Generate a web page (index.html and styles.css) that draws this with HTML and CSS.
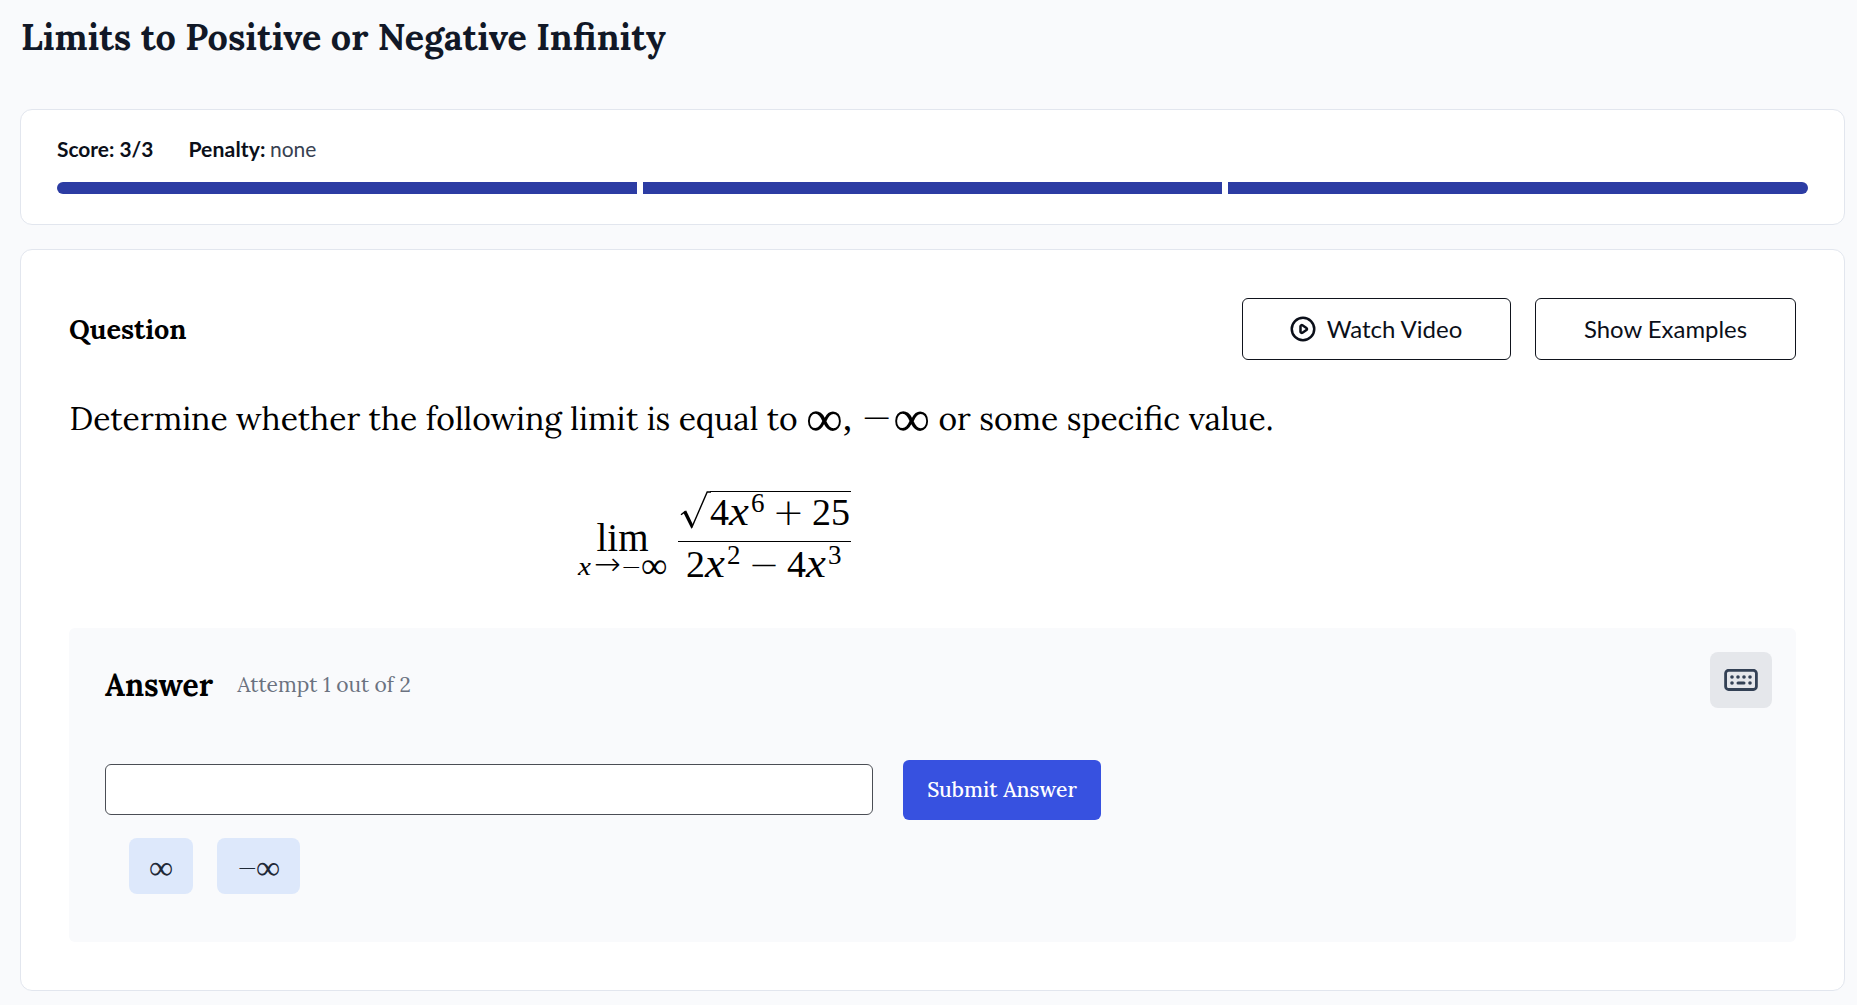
FILE: index.html
```html
<!DOCTYPE html>
<html lang="en">
<head>
<meta charset="utf-8">
<title>Limits to Positive or Negative Infinity</title>
<link rel="stylesheet" href="styles.css">
</head>
<body>
<h1 class="page-title">Limits to Positive or Negative Infinity</h1>

<section class="card score-card">
  <div class="score-row">
    <span class="strong">Score: 3/3</span>
    <span><span class="strong penalty">Penalty:</span> <span class="muted">none</span></span>
  </div>
  <div class="progress"><i></i><i></i><i></i></div>
</section>

<main class="card question-card">
  <header class="question-head">
    <h2>Question</h2>
    <div class="actions">
      <button class="outline-btn watch">
        <svg width="30" height="30" viewBox="0 0 24 24" fill="none" stroke="currentColor" stroke-width="2" stroke-linecap="round" stroke-linejoin="round"><path d="M14.752 11.168l-3.197-2.132A1 1 0 0010 9.87v4.263a1 1 0 001.555.832l3.197-2.132a1 1 0 000-1.664z"/><path d="M21 12a9 9 0 11-18 0 9 9 0 0118 0z"/></svg>
        <span>Watch Video</span>
      </button>
      <button class="outline-btn examples"><span>Show Examples</span></button>
    </div>
  </header>

  <p class="prompt">Determine whether the following limit is equal to <span class="inf">∞</span><span class="comma">,</span> <span class="op neg">−</span><span class="inf">∞</span> or some specific value.</p>

  <div class="formula">
    <div class="lim">
      <span class="lim-word">lim</span>
      <span class="lim-sub"><i class="var">x</i><span class="op arrow">→</span><span class="op neg">−</span><span class="inf">∞</span></span>
    </div>
    <div class="fraction">
      <div class="numerator">
        <svg class="radical" width="32" height="40" viewBox="0 0 32 40"><path d="M2 23.8L6 20.6L13.2 35.5L28.2 1H32" fill="none" stroke="#000" stroke-width="1.4"/><path d="M4.4 21.8L7.2 19.6L13.9 33.5L12.6 38Z"/></svg>
        <div class="radicand"><span>4</span><i class="var">x</i><sup>6</sup><span class="op plus">+</span><span>25</span></div>
      </div>
      <div class="denominator"><span>2</span><i class="var">x</i><sup>2</sup><span class="op minus">−</span><span>4</span><i class="var">x</i><sup>3</sup></div>
    </div>
  </div>

  <section class="answer">
    <div class="answer-head">
      <h3>Answer</h3>
      <span class="attempt">Attempt 1 out of 2</span>
      <button class="keyboard" aria-label="Keyboard">
        <svg width="34" height="22" viewBox="0 0 34 22" fill="#334155"><rect x="1.6" y="1.3" width="30.8" height="19.2" rx="3" fill="none" stroke="#334155" stroke-width="2.8"/><circle cx="8" cy="8" r="1.8"/><circle cx="14" cy="8" r="1.8"/><circle cx="20" cy="8" r="1.8"/><circle cx="26" cy="8" r="1.8"/><circle cx="8" cy="14" r="1.8"/><rect x="12.5" y="12.4" width="9" height="3.2" rx="1.5"/><circle cx="26" cy="14" r="1.8"/></svg>
      </button>
    </div>
    <div class="answer-form">
      <input class="answer-input" type="text" aria-label="Answer">
      <button class="submit">Submit Answer</button>
    </div>
    <div class="chips">
      <button class="chip chip-inf"><span class="inf">∞</span></button>
      <button class="chip chip-neg"><span class="op neg">−</span><span class="inf">∞</span></button>
    </div>
  </section>
</main>
</body>
</html>
```
FILE: styles.css
```css
* { box-sizing: border-box; }
body {
  margin: 0;
  padding: 12px 12px 0 20px;
  background: #f9fafc;
  color: #000;
  font-family: Lora, "Liberation Serif", serif;
}
h1, h2, h3, p { margin: 0; }
button { font: inherit; margin: 0; padding: 0; border: 0; }

.page-title {
  margin-left: 1px;
  height: 97px;
  font-size: 35.9px;
  line-height: 50px;
  font-weight: 700;
  color: #111827;
}
.card {
  background: #fff;
  border: 1px solid #e2e6ee;
  border-radius: 12px;
}
.score-card { height: 116px; padding: 25px 36px 0; }
.score-row {
  display: flex;
  gap: 35px;
  font-family: Lato, "Liberation Sans", sans-serif;
  font-size: 21px;
  line-height: 28px;
  white-space: nowrap;
}
.strong { font-weight: 700; color: #0b0f19; font-size: 20.9px; }
.penalty { font-size: 21.2px; letter-spacing: 0.1px; margin-right: -1px; }
.muted { color: #374151; }
.progress {
  display: grid;
  grid-template-columns: repeat(3, 1fr);
  gap: 6px;
  height: 12px;
  margin-top: 19px;
  border-radius: 6px;
  overflow: hidden;
}
.progress i { background: #2c3ca3; }

.question-card { height: 742px; margin-top: 24px; padding: 48px; }
.question-head {
  display: flex;
  align-items: center;
  justify-content: space-between;
  height: 62px;
}
.question-head h2 { font-size: 27px; line-height: 36px; font-weight: 700; }
.actions { display: flex; gap: 24px; }
.outline-btn {
  display: flex;
  align-items: center;
  justify-content: center;
  height: 62px;
  gap: 9px;
  background: #fff;
  border: 1px solid #0f131c;
  border-radius: 6px;
  color: #0b0f19;
  font-family: Lato, "Liberation Sans", sans-serif;
  font-size: 24px;
}
.outline-btn span { padding-bottom: 2px; }
.watch { width: 269px; padding-right: 3px; }
.examples { width: 261px; font-size: 23.9px; }

.inf {
  display: inline-block;
  font-family: KaTeX_Main, "Liberation Serif", serif;
  font-size: 1.62em;
  line-height: 0;
}
.op {
  display: inline-block;
  font-family: KaTeX_Main, "DejaVu Sans", sans-serif;
  font-weight: 200;
  line-height: 0;
  text-align: center;
}
.prompt {
  height: 52px;
  margin-top: 33px;
  padding-left: 0.5px;
  font-size: 31.86px;
  line-height: 52px;
  white-space: nowrap;
}
.prompt .inf { vertical-align: -6px; }
.comma { display: inline-block; width: 12px; font: 38px/0 "Liberation Serif", serif; }
.prompt .neg { width: 30px; font-size: 38px; text-indent: -3px; }

.formula {
  display: flex;
  justify-content: center;
  width: 1291px;
  height: 143px;
  margin-top: 40px;
  font-family: KaTeX_Main, "Liberation Serif", serif;
  font-size: 38px;
}
.lim { width: 100px; margin-top: 33px; }
.lim span { white-space: nowrap; }
.lim-word { display: block; font-size: 39px; line-height: 39px; text-align: center; margin-left: -11px; }
.lim-sub { display: flex; align-items: baseline; height: 26px; font-size: 25px; line-height: 20px; }
.var {
  font-family: KaTeX_Math, "Liberation Serif", serif;
  font-style: italic;
  transform: scaleX(1.12);
  transform-origin: left;
}
.lim-sub .var { width: 16px; font-size: 26px; }
.lim-sub .arrow { width: 27px; font-size: 32px; }
.lim-sub .neg { width: 20px; font-size: 25px; }
.lim-sub .inf { position: relative; top: 3px; font-size: 37px; }
.fraction { width: 173px; }
.numerator { display: flex; height: 57px; padding: 5px 0 0 1px; border-bottom: 1px solid #000; }
.radical { flex: none; margin-top: 1px; }
.radicand, .denominator {
  display: flex;
  align-items: baseline;
  height: 44px;
  line-height: 44px;
  white-space: nowrap;
}
.radicand { flex: 1; height: 40px; margin: 1px 0 0 -1px; line-height: 40px; border-top: 1.5px solid #000; }
.denominator { padding-left: 8px; line-height: 43px; }
.radicand .var, .denominator .var { width: 22px; font-size: 40px; }
sup { position: relative; top: -13px; width: 14px; font-size: 27px; line-height: 0; }
.plus { width: 47px; font-size: 38px; }
.minus { width: 46px; font-size: 37px; }

.answer {
  height: 314px;
  padding: 24px 24px 0 36px;
  background: #f9fafc;
  border-radius: 6px;
}
.answer-head { display: flex; align-items: center; height: 56px; }
.answer h3 { padding-top: 10px; font-size: 30px; line-height: 40px; font-weight: 700; }
.attempt { margin-left: 24px; padding-top: 9px; font-size: 21px; color: #6b7280; }
.keyboard {
  display: flex;
  align-items: center;
  justify-content: center;
  width: 62px;
  height: 56px;
  margin-left: auto;
  background: #e5e7eb;
  border-radius: 8px;
}
.answer-form { display: flex; align-items: center; gap: 30px; height: 60px; margin-top: 52px; }
.answer-input {
  width: 768px;
  height: 51px;
  margin-bottom: 1px;
  border: 1px solid #4b4e55;
  border-radius: 6px;
  background: #fff;
}
.submit {
  width: 198px;
  height: 60px;
  padding-bottom: 2px;
  border-radius: 6px;
  background: #3751e0;
  color: #fff;
  font-size: 21px;
  font-weight: 500;
}
.chips { display: flex; gap: 24px; margin: 18px 0 0 24px; }
.chip {
  display: flex;
  align-items: center;
  justify-content: center;
  height: 56px;
  padding-top: 4px;
  border-radius: 8px;
  background: #dde8fb;
  color: #1f2937;
}
.chip-inf { width: 64px; }
.chip-neg { width: 83px; }
.chip .inf { font-size: 34px; }
.chip .neg { width: 19px; font-size: 25px; }
```
